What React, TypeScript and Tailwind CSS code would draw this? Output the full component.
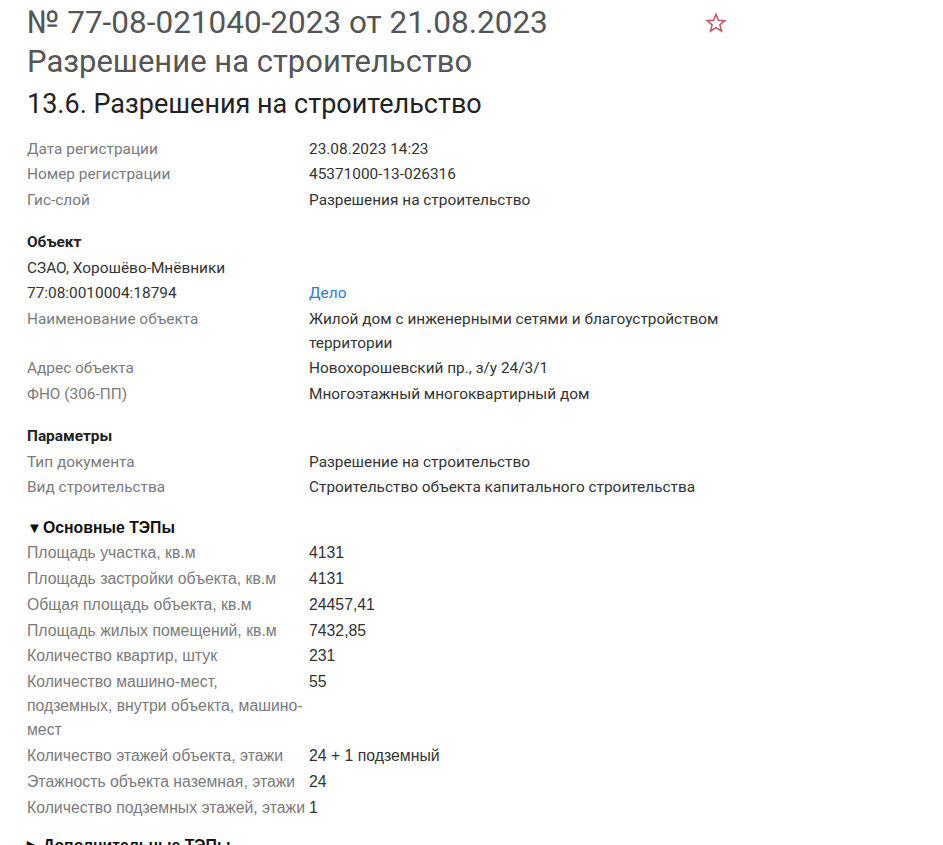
import React from "react";

const roboto = { fontFamily: "Roboto, 'Liberation Sans', sans-serif" };

function Row({ label, value, labelClass = "text-[#7a7a7a]", valueClass = "text-[#333]" }: { label: React.ReactNode; value?: React.ReactNode; labelClass?: string; valueClass?: string }) {
  return (
    <div className="flex leading-[24px] py-[0.75px]">
      <div className={`w-[282px] shrink-0 pr-1 ${labelClass}`}>{label}</div>
      <div className={`w-[420px] ${valueClass}`}>{value}</div>
    </div>
  );
}

export default function App() {
  const teps: [string, string][] = [
    ["Площадь участка, кв.м", "4131"],
    ["Площадь застройки объекта, кв.м", "4131"],
    ["Общая площадь объекта, кв.м", "24457,41"],
    ["Площадь жилых помещений, кв.м", "7432,85"],
    ["Количество квартир, штук", "231"],
    ["Количество машино-мест, подземных, внутри объекта, машино-мест", "55"],
    ["Количество этажей объекта, этажи", "24 + 1 подземный"],
    ["Этажность объекта наземная, этажи", "24"],
    ["Количество подземных этажей, этажи", "1"],
  ];
  return (
    <div className="w-[943px] h-[845px] overflow-hidden bg-white pl-[27px]" style={roboto}>
      <div className="w-[705px]">
        <div className="flex items-start justify-between pt-[3px]">
          <div className="text-[31.5px] leading-[40px] text-[#555]">№ 77-08-021040-2023 от 21.08.2023</div>
          <svg width="22" height="22" viewBox="0 0 24 24" className="mt-[9px] mr-[5px]" fill="none" stroke="#c9505a" strokeWidth="1.6" strokeLinejoin="miter">
            <path d="M12 2.5l2.6 6.6 7 .4-5.4 4.5 1.8 6.9L12 17l-6 3.9 1.8-6.9-5.4-4.5 7-.4z" />
          </svg>
        </div>
        <div className="text-[31px] leading-[38px] text-[#555]">Разрешение на строительство</div>
        <div className="text-[27px] leading-[36px] text-[#222] mt-[5px]">13.6. Разрешения на строительство</div>

        <div className="mt-[14px] text-[15.4px]">
          <Row label="Дата регистрации" value="23.08.2023 14:23" />
          <Row label="Номер регистрации" value="45371000-13-026316" />
          <Row label="Гис-слой" value="Разрешения на строительство" />
        </div>

        <div className="mt-[17px] text-[15.4px]">
          <div className="font-bold text-[#222] leading-[24px] py-[0.75px]">Объект</div>
          <div className="text-[#333] leading-[24px] py-[0.75px]">СЗАО, Хорошёво-Мнёвники</div>
          <Row label="77:08:0010004:18794" labelClass="text-[#333]" value="Дело" valueClass="text-[#2a7bd2]" />
          <Row label="Наименование объекта" value="Жилой дом с инженерными сетями и благоустройством территории" />
          <Row label="Адрес объекта" value="Новохорошевский пр., з/у 24/3/1" />
          <Row label="ФНО (306-ПП)" value="Многоэтажный многоквартирный дом" />
        </div>

        <div className="mt-[17px] text-[15.4px]">
          <div className="font-bold text-[#222] leading-[24px] py-[0.75px]">Параметры</div>
          <Row label="Тип документа" value="Разрешение на строительство" />
          <Row label="Вид строительства" value="Строительство объекта капитального строительства" />
        </div>

        <div className="mt-[15px] text-[15.8px]" style={{ fontFamily: "'Liberation Sans', Arial, sans-serif" }}>
          <div className="font-bold text-[#111] leading-[24px] py-[0.75px] flex items-center">
            <span className="text-[15px] w-[16px]">▼</span>
            <span>Основные ТЭПы</span>
          </div>
          <div className="flex flex-col gap-[0.3px]">
            {teps.map(([l, v]) => (
              <Row key={l} label={l} value={v} />
            ))}
          </div>
          <div className="font-bold text-[#111] leading-[24px] py-[0.75px] mt-[13px] flex items-center">
            <span className="text-[15px] w-[16px]">▶</span>
            <span>Дополнительные ТЭПы</span>
          </div>
        </div>
      </div>
    </div>
  );
}
